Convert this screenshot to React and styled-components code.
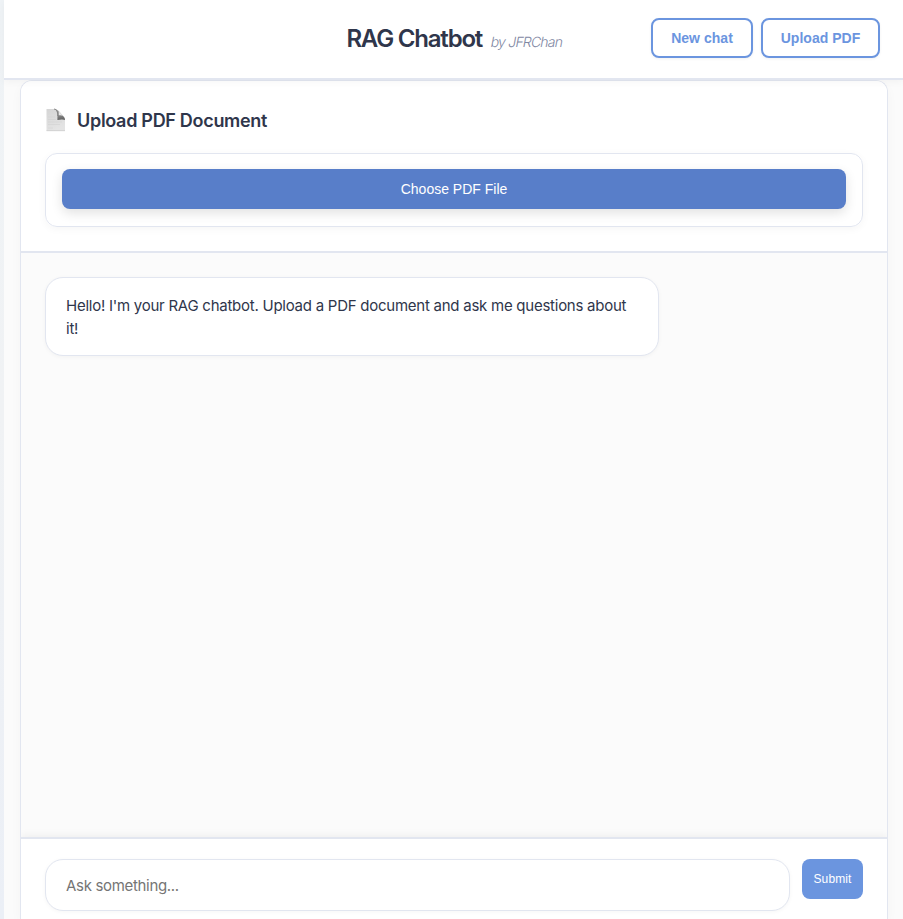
import React from "react";
import styled, { createGlobalStyle } from "styled-components";

const GlobalStyle = createGlobalStyle`
  *, *::before, *::after { box-sizing: border-box; }
  body { margin: 0; overflow: hidden; background: #fbfbfb; }
  button, input { margin: 0; }
`;

const Page = styled.div`
  display: flex;
  height: 919px;
  overflow: hidden;
  font-family: Inter, "Liberation Sans", sans-serif;
  color: #2f364b;
  background: #fbfbfb;
`;

const Edge = styled.div`
  flex: 0 0 4px;
  background: linear-gradient(#eff3f6, #f0f2f4 45%, #ebeff6);
`;

const Main = styled.div`
  flex: 1;
  min-width: 0;
  display: flex;
  flex-direction: column;
`;

const Header = styled.header`
  position: relative;
  z-index: 1;
  flex: 0 0 80px;
  display: grid;
  grid-template-columns: 1fr auto 1fr;
  align-items: center;
  padding: 0 23px 2px 25px;
  background: #fff;
  border-bottom: 2px solid #e2e6f0;
  box-shadow: 0 2px 8px rgba(0, 0, 0, 0.04);
`;

const Brand = styled.div`
  grid-column: 2;
  display: flex;
  align-items: baseline;
  gap: 9px;
  padding-top: 2px;
  white-space: nowrap;
`;

const Title = styled.h1`
  margin: 0;
  font-size: 24px;
  line-height: 32px;
  font-weight: 600;
  letter-spacing: -1.2px;
`;

const Byline = styled.span`
  font-size: 14px;
  font-weight: 300;
  letter-spacing: -0.78px;
  color: #7f88a3;
  transform: skewX(-11deg);
`;

const Actions = styled.div`
  display: flex;
  justify-content: flex-end;
  gap: 8px;
`;

const OutlineButton = styled.button`
  width: ${(p) => p.$width}px;
  height: 40px;
  padding: 0;
  border: 2px solid #6b95df;
  border-radius: 8px;
  background: #fff;
  color: #6b95df;
  font: 700 14px "Liberation Sans", sans-serif;
  letter-spacing: 0.03px;
  white-space: nowrap;
  box-shadow: 0 1px 3px rgba(0, 0, 0, 0.06);
`;

const Panel = styled.main`
  flex: 1;
  display: flex;
  flex-direction: column;
  margin: 0 15px 0 16px;
  border: 1px solid #e2e6f0;
  border-bottom: 0;
  border-radius: 12px 12px 0 0;
  overflow: hidden;
  background: #fbfbfb;
  box-shadow: 0 4px 12px rgba(0, 0, 0, 0.03);
`;

const UploadSection = styled.section`
  flex: 0 0 172px;
  padding: 24px;
  background: #fff;
  border-bottom: 2px solid #e2e6f0;
`;

const Heading = styled.h2`
  display: flex;
  align-items: center;
  gap: 11px;
  height: 30px;
  margin: 0 0 18px;
  font-size: 18px;
  font-weight: 600;
  letter-spacing: -0.3px;
`;

const UploadCard = styled.div`
  height: 74px;
  padding: 15px 16px;
  border: 1px solid #e2e6f0;
  border-radius: 12px;
  box-shadow: 0 2px 8px rgba(0, 0, 0, 0.04);
`;

const ChooseButton = styled.button`
  display: block;
  width: 100%;
  height: 40px;
  border: 0;
  border-radius: 8px;
  background: #587ec9;
  color: #fff;
  font: 400 14px "Liberation Sans", sans-serif;
  letter-spacing: 0;
  box-shadow: 0 4px 12px rgba(0, 0, 0, 0.12);
`;

const Messages = styled.section`
  flex: 1;
  padding: 24px;
`;

const Bubble = styled.div`
  width: 614px;
  height: 79px;
  padding: 16px 20px;
  border: 1px solid #e2e6f0;
  border-radius: 18px;
  background: #fff;
  font-size: 15px;
  line-height: 23px;
  letter-spacing: -0.25px;
  box-shadow: 0 1px 4px rgba(0, 0, 0, 0.04);
`;

const Composer = styled.form`
  flex: 0 0 82px;
  display: flex;
  align-items: flex-start;
  gap: 12px;
  padding: 20px 24px 0;
  background: #fff;
  border-top: 2px solid #e2e6f0;
  box-shadow: 0 -2px 8px rgba(0, 0, 0, 0.05);
`;

const Question = styled.input`
  flex: 1;
  min-width: 0;
  height: 52px;
  padding: 0 20px;
  border: 1px solid #e2e6f0;
  border-radius: 18px;
  background: #fff;
  font: 400 15px Inter, sans-serif;
  letter-spacing: -0.32px;
  box-shadow: 0 1px 4px rgba(0, 0, 0, 0.04);
  &::placeholder { color: #757575; opacity: 1; }
`;

const Submit = styled.button`
  width: 61px;
  height: 40px;
  padding: 0;
  border: 0;
  border-radius: 8px;
  background: #6b95df;
  color: #fff;
  font: 400 12px "Liberation Sans", sans-serif;
  letter-spacing: 0.1px;
`;

function PageIcon() {
  return (
    <svg width="21" height="24" viewBox="0 0 21 24" aria-hidden="true">
      <defs>
        <linearGradient id="paper" x1="0" y1="0" x2="0.4" y2="1">
          <stop offset="0" stopColor="#d5d5d5" />
          <stop offset="1" stopColor="#e4e4e4" />
        </linearGradient>
        <linearGradient id="fold" x1="0" y1="0" x2="0.2" y2="1">
          <stop offset="0" stopColor="#b5b5b5" />
          <stop offset="0.6" stopColor="#8c8c8c" />
          <stop offset="1" stopColor="#686868" />
        </linearGradient>
      </defs>
      <path d="M1.5 1H10C13 1 20 9 20 12V23H1.5Z" fill="url(#paper)" />
      <path d="M9 1C11 1 12.3 1.8 13.5 3.1L19 9C19.8 10 20 11 20 12C18.2 11.2 15.5 11.4 12.4 12C12.6 7 12.5 2.3 9 1Z" fill="url(#fold)" />
      <path d="M13.8 3.2L18.7 8.4C17 7.4 15.2 7.2 13.6 7.3Z" fill="#e8e8e8" />
      <path d="M9 1C12 1.2 13.2 4.5 12.8 8" fill="none" stroke="#777" strokeWidth="0.8" />
      <path d="M3 9H10M3 11.5H11M3 14H17M3 16.5H15M3 20H8" stroke="#cbcbcb" strokeWidth="0.4" />
      <path d="M1.5 22.7H20" stroke="#c4c4c4" strokeWidth="0.6" />
    </svg>
  );
}

export default function App() {
  return (
    <>
      <GlobalStyle />
      <Page>
        <Edge />
        <Main>
          <Header>
            <span />
            <Brand>
              <Title>RAG Chatbot</Title>
              <Byline>by JFRChan</Byline>
            </Brand>
            <Actions>
              <OutlineButton $width={102}>New chat</OutlineButton>
              <OutlineButton $width={119}>Upload PDF</OutlineButton>
            </Actions>
          </Header>
          <Panel>
            <UploadSection>
              <Heading>
                <PageIcon />
                Upload PDF Document
              </Heading>
              <UploadCard>
                <ChooseButton>Choose PDF File</ChooseButton>
              </UploadCard>
            </UploadSection>
            <Messages>
              <Bubble>
                Hello! I'm your RAG chatbot. Upload a PDF document and ask me questions about it!
              </Bubble>
            </Messages>
            <Composer onSubmit={(e) => e.preventDefault()}>
              <Question placeholder="Ask something..." />
              <Submit>Submit</Submit>
            </Composer>
          </Panel>
        </Main>
      </Page>
    </>
  );
}
